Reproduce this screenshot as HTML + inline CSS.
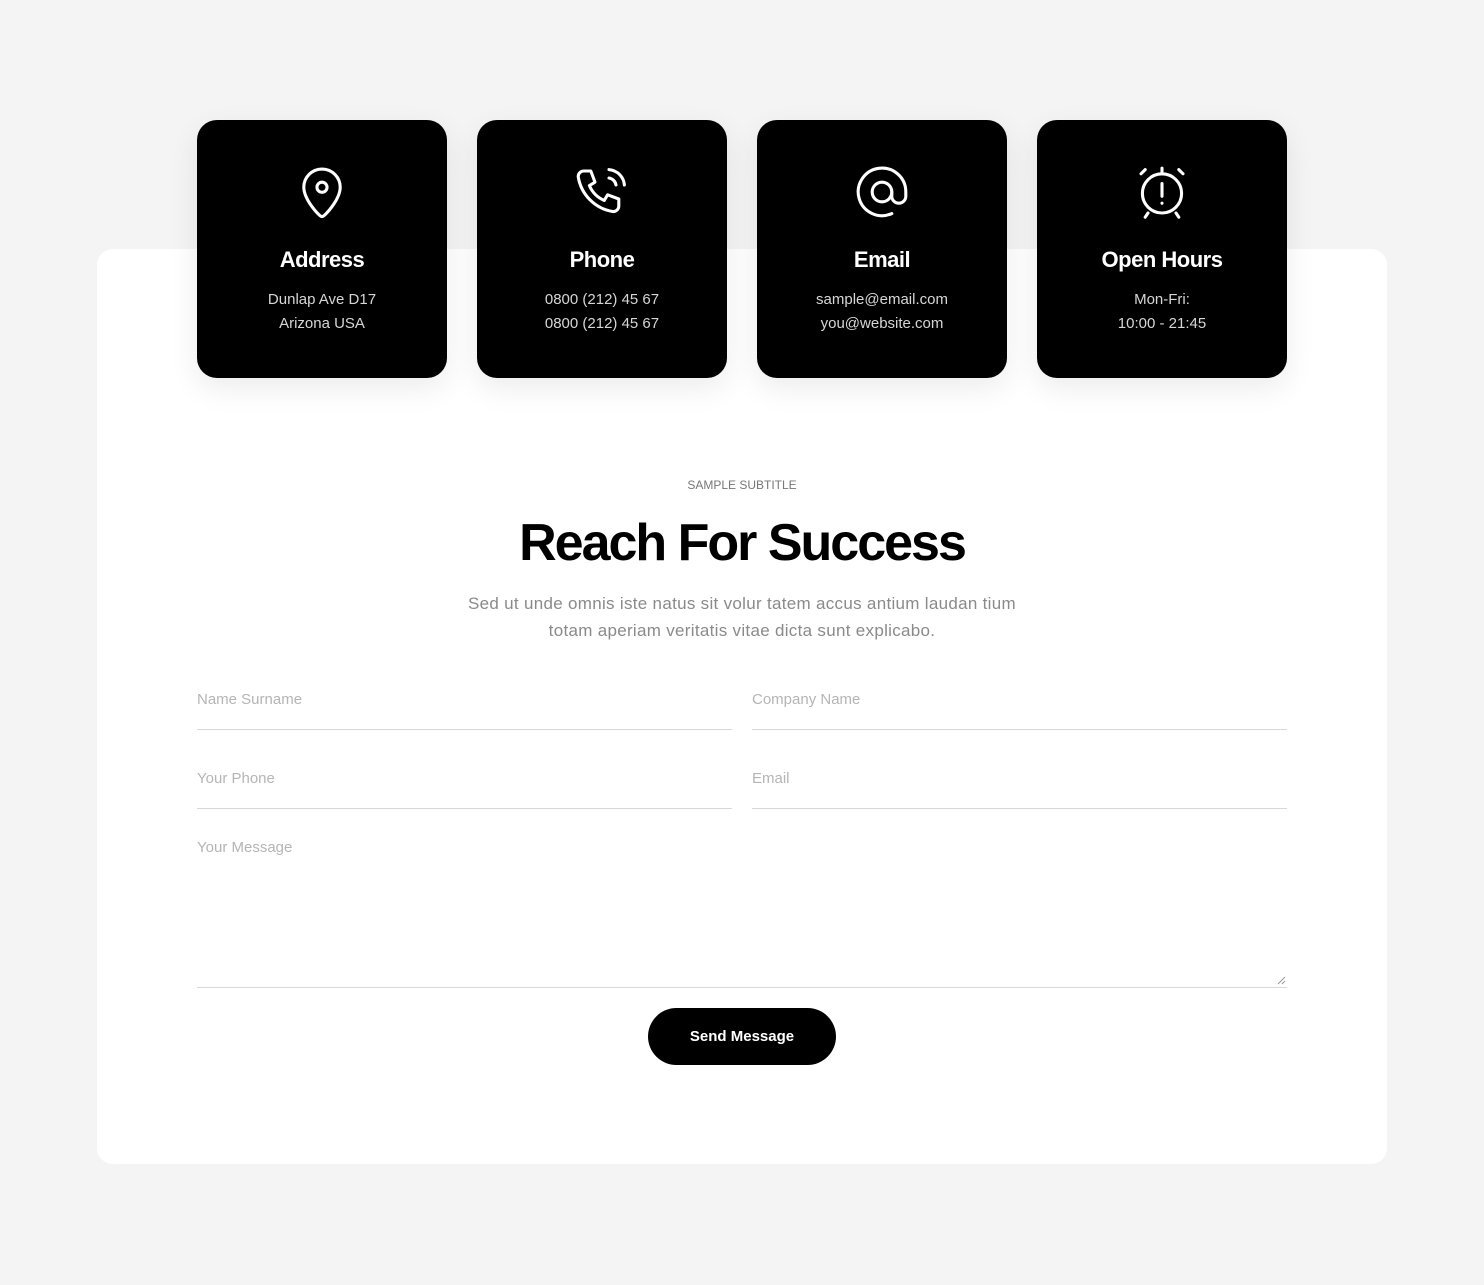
<!DOCTYPE html>
<html><head><meta charset="utf-8"><style>
*{box-sizing:border-box;margin:0;padding:0}
body{width:1484px;height:1285px;background:#f4f4f4;font-family:"Liberation Sans",sans-serif;position:relative;overflow:hidden}
.panel{position:absolute;left:97px;top:249px;width:1290px;height:915px;background:#fff;border-radius:16px}
.card{position:absolute;top:120px;width:250px;height:258px;background:#000;border-radius:20px;color:#fff;text-align:center;box-shadow:0 10px 30px rgba(0,0,0,.08)}
.card svg{position:absolute;left:97px;top:44px}
.card h3{position:absolute;top:127px;width:100%;font-size:22px;font-weight:700;letter-spacing:-.5px}
.card p{position:absolute;top:168px;width:100%;font-size:15px;line-height:24px;color:#d6d6d6}
.sub{position:absolute;top:478px;width:100%;text-align:center;font-size:12px;color:#777}
h1{position:absolute;top:513px;width:100%;text-align:center;font-size:52px;font-weight:700;letter-spacing:-2px;color:#000}
.desc{position:absolute;top:590px;width:100%;text-align:center;font-size:17px;line-height:27px;color:#8a8a8a;letter-spacing:.3px}
.f{position:absolute;height:1px;background:#d8d8d8}
.l{position:absolute;font-size:15px;color:#b5b5b5}
.btn{position:absolute;left:648px;top:1008px;width:188px;height:57px;border-radius:29px;background:#000;color:#fff;font-size:15px;font-weight:700;text-align:center;line-height:57px}
</style></head><body>
<div class="panel"></div>
<div class="card" style="left:197px"><svg width="56" height="56" viewBox="2 2 20 20" fill="none" stroke="#fff" stroke-width="1.1" stroke-linecap="round" stroke-linejoin="round"><circle cx="12" cy="10.3" r="1.8"/><path d="M12 20.8c-1 0-6.5-6.2-6.5-10.5a6.5 6.5 0 0 1 13 0c0 4.3-5.5 10.5-6.5 10.5z"/></svg><h3>Address</h3><p>Dunlap Ave D17<br>Arizona USA</p></div>
<div class="card" style="left:477px"><svg width="56" height="56" viewBox="2 2 20 20" fill="none" stroke="#fff" stroke-width="1.1" stroke-linecap="round" stroke-linejoin="round"><path d="M5.5 4.5h2.5l1.5 4-2 1.2a10 10 0 0 0 5.3 5.3l1.2-2 4 1.5v2.5a2 2 0 0 1-2 2A15 15 0 0 1 3.5 6.5a2 2 0 0 1 2-2"/><path d="M14.5 7a3 3 0 0 1 2.5 2.5M14.5 4a6 6 0 0 1 5.5 5.5"/></svg><h3>Phone</h3><p>0800 (212) 45 67<br>0800 (212) 45 67</p></div>
<div class="card" style="left:757px"><svg width="56" height="56" viewBox="2 2 20 20" fill="none" stroke="#fff" stroke-width="1.1" stroke-linecap="round" stroke-linejoin="round"><circle cx="12" cy="12" r="3.5"/><path d="M15.5 12v1.5a2.5 2.5 0 0 0 5 0V12a8.5 8.5 0 1 0-5 7.7"/></svg><h3>Email</h3><p>sample@email.com<br>you@website.com</p></div>
<div class="card" style="left:1037px"><svg width="56" height="56" viewBox="2 2 20 20" fill="none" stroke="#fff" stroke-width="1.1" stroke-linecap="round" stroke-linejoin="round"><circle cx="12" cy="12.5" r="7"/><path d="M12 9v4.5M12 16v.01M4.5 5.5 6 4M19.5 5.5 18 4M12 3.5v2M7 19.5 6 21M17 19.5l1 1.5"/></svg><h3>Open Hours</h3><p>Mon-Fri:<br>10:00 - 21:45</p></div>
<div class="sub">SAMPLE SUBTITLE</div>
<h1>Reach For Success</h1>
<div class="desc">Sed ut unde omnis iste natus sit volur tatem accus antium laudan tium<br>totam aperiam veritatis vitae dicta sunt explicabo.</div>
<div class="l" style="left:197px;top:691px">Name Surname</div>
<div class="l" style="left:752px;top:691px">Company Name</div>
<div class="f" style="left:197px;top:729px;width:535px"></div>
<div class="f" style="left:752px;top:729px;width:535px"></div>
<div class="l" style="left:197px;top:770px">Your Phone</div>
<div class="l" style="left:752px;top:770px">Email</div>
<div class="f" style="left:197px;top:808px;width:535px"></div>
<div class="f" style="left:752px;top:808px;width:535px"></div>
<div class="l" style="left:197px;top:839px">Your Message</div>
<div class="f" style="left:197px;top:987px;width:1090px"></div>
<svg style="position:absolute;left:1277px;top:976px" width="9" height="9"><path d="M1 8 8 1M5 8 8 5" stroke="#999" stroke-width="1"/></svg>
<div class="btn">Send Message</div>
</body></html>
